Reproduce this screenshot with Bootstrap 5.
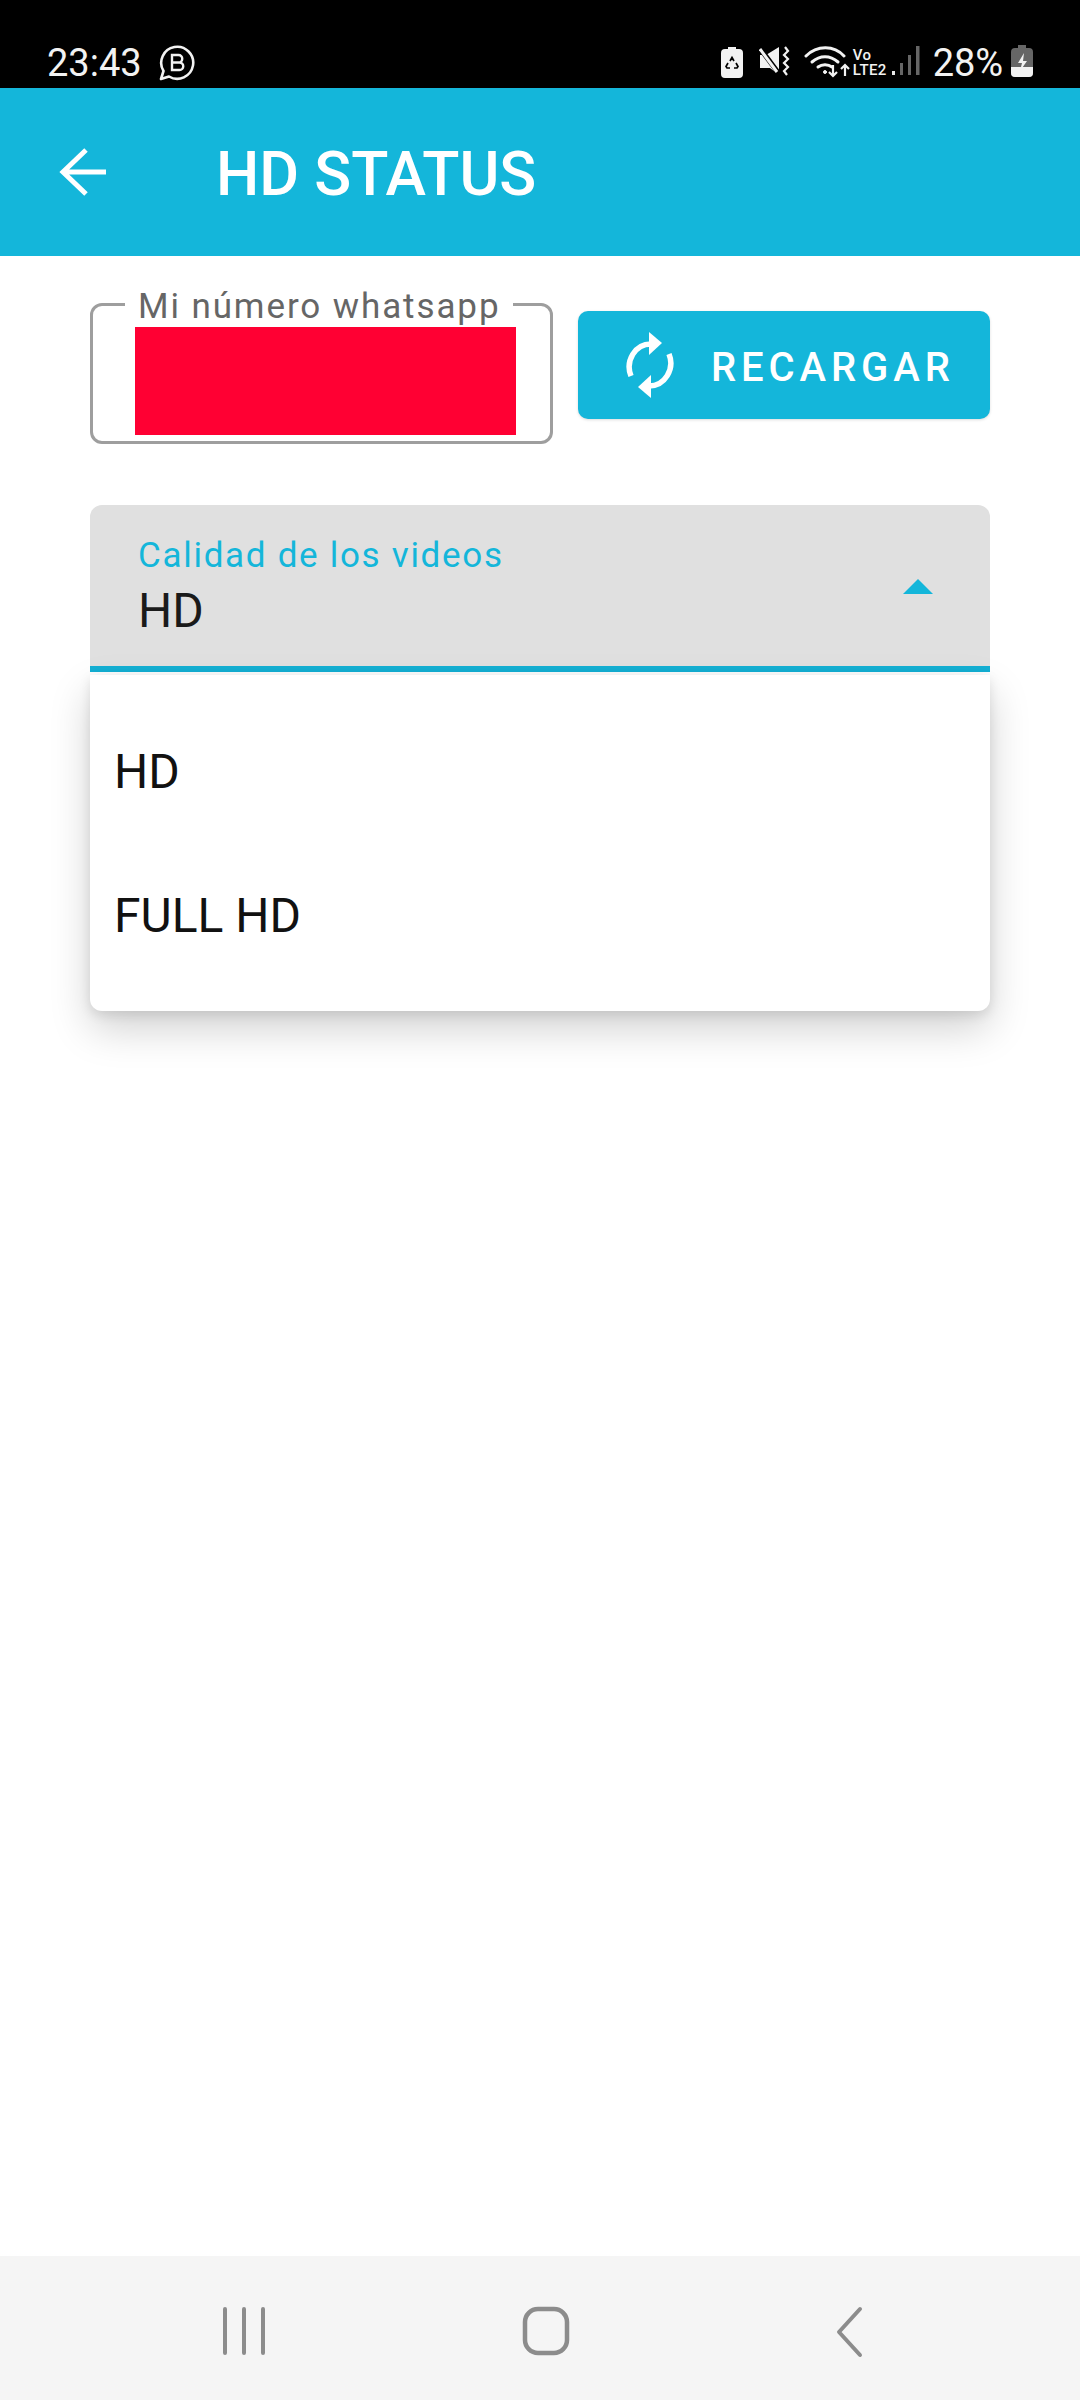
<!DOCTYPE html>
<html lang="es">
<head>
  <meta charset="UTF-8">
  <meta name="viewport" content="width=device-width, initial-scale=1">
  <title>HD Status</title>
  <link href="https://cdn.jsdelivr.net/npm/bootstrap@5.3.3/dist/css/bootstrap.min.css" rel="stylesheet">
  <style>
    body { font-family: Roboto, "Liberation Sans", sans-serif; background: #fff; }
    .app-screen { width: 1080px; min-height: 2400px; }

    .status-strip { height: 88px; background: #000; color: #f2f2f2; padding: 44px 47px 0 47px; }
    .clock { font-size: 38px; line-height: 38px; margin-right: 16px; }
    .pct { font-size: 38px; line-height: 38px; letter-spacing: -.1px; margin-left: 13px; margin-right: 8px; }
    .net-label { font-size: 15px; line-height: 15px; font-weight: 500; letter-spacing: .4px; width: 33px; margin: 4px 6px 0 3px; }

    .top-strip { height: 168px; background: #14b6da; color: #fff; padding-left: 59px; }
    .top-title { font-size: 61px; font-weight: 500; line-height: 1; margin: 5px 0 0 107px; }

    .content-area { padding: 47px 90px 0 90px; }
    .number-box { width: 463px; height: 141px; border: 3px solid #9e9e9e; border-radius: 12px; padding: 21px 34px 6px 42px; }
    .number-label { top: -19px; left: 32px; padding: 0 13px; background: #fff; color: #666; font-size: 35px; line-height: 40px; letter-spacing: 1.9px; white-space: nowrap; }
    .redacted { height: 108px; background: #ff0033; }

    .reload-btn { width: 412px; height: 108px; margin: 8px 0 0 25px; background: #14b6da; color: #fff; border: 0; border-radius: 10px; font-size: 40px; font-weight: 500; letter-spacing: 4.9px; padding: 0 0 0 48px; box-shadow: 0 1px 3px rgba(0,0,0,.14); }
    .reload-btn svg { margin-right: 37px; }
    .reload-btn span { margin-top: 6px; }
    .reload-btn:hover { background: #14b6da; color: #fff; }

    .quality-wrap { margin-top: 61px; }
    .quality-field { height: 167px; background: #e0e0e0; border-bottom: 6px solid #14b0d4; border-radius: 12px 12px 0 0; padding: 31px 57px 0 48px; }
    .quality-label { color: #14b6da; font-size: 35px; line-height: 40px; letter-spacing: 1.7px; }
    .quality-value { color: #1a1a1a; font-size: 48px; line-height: 56px; margin-top: 7px; }
    .quality-arrow { width: 0; height: 0; border-left: 15px solid transparent; border-right: 15px solid transparent; border-bottom: 15px solid #14b6da; margin-top: 43px; }

    .quality-menu { top: 170px; left: 0; right: 0; height: 336px; padding: 25px 0 23px; background: #fff; border-radius: 0 0 12px 12px; box-shadow: 0 18px 40px rgba(0,0,0,.18), 0 4px 12px rgba(0,0,0,.1); z-index: 5; }
    .quality-option { height: 144px; padding-left: 24px; color: #111; font-size: 48px; }

    .nav-strip { height: 144px; background: #f5f5f5; padding: 50px 0 0 222px; }
    .nav-recents { margin-right: 256px; }
    .nav-home { margin-right: 266px; }
  </style>
</head>
<body>
  <div class="app-screen d-flex flex-column">

    <!-- barra de estado -->
    <div class="status-strip d-flex align-items-start">
      <span class="clock">23:43</span>
      <svg width="38" height="38" viewBox="0 0 38 38" fill="none" stroke="#f2f2f2" stroke-width="2.6">
        <path d="M3 35 L5.500 27 A16 16 0 1 1 11 32.500 Z" stroke-linejoin="round"/>
        <path d="M14 11h6.500a3.400 3.400 0 0 1 0 7.500H14zM14 18.500h7.500a3.600 3.600 0 0 1 0 7.500H14z" stroke-width="2.400"/>
      </svg>
      <div class="ms-auto d-flex align-items-start">
        <svg class="me-3" width="22" height="31" viewBox="0 0 22 31" style="margin-top:3px">
          <path d="M7 0h8v2h3a4 4 0 0 1 4 4v21a4 4 0 0 1-4 4H4a4 4 0 0 1-4-4V6a4 4 0 0 1 4-4h3z" fill="#f2f2f2"/>
          <path d="M9 14l2-3.500 2 3.500M15 16l2 3.500-1 1.500h-3M7 16l-2 3.500 1 1.500h3" fill="none" stroke="#000" stroke-width="1.700"/>
        </svg>
        <svg width="31" height="30" viewBox="0 0 31 30" style="margin:2px 14px 0 0">
          <path d="M1 9h6l13-8v28l-9-7H1z" fill="#f2f2f2"/>
          <path d="M0 1l21 28" stroke="#000" stroke-width="5"/>
          <path d="M1 3l17 23" stroke="#f2f2f2" stroke-width="3"/>
          <path d="M26 1l3 4-4 4 4 4-4 4 4 4-4 4 3 4" fill="none" stroke="#f2f2f2" stroke-width="2.200"/>
        </svg>
        <svg width="46" height="32" viewBox="0 0 46 32" fill="none" stroke="#f2f2f2" stroke-linecap="round" style="margin-top:2px">
          <path d="M2 10C13-1 30-1 40 10" stroke-width="3"/>
          <path d="M8 16c8-7 18-7 26 0" stroke-width="3"/>
          <path d="M14 21c4-3 10-3 14 0" stroke-width="3"/>
          <circle cx="21" cy="26" r="1.500" fill="#f2f2f2" stroke-width="1"/>
          <path d="M29 19v11M25 26l4 4 4-4M41 30V19M37 23l4-4 4 4" stroke-width="2.200" stroke-linecap="butt"/>
        </svg>
        <div class="net-label"><div>Vo</div><div>LTE2</div></div>
        <svg width="28" height="30" viewBox="0 0 28 30" style="margin-top:2px">
          <rect x="0" y="25" width="3" height="4" fill="#e8e8e8"/>
          <rect x="8" y="17" width="3" height="12" fill="#666"/>
          <rect x="16" y="9" width="3" height="20" fill="#666"/>
          <rect x="24" y="0" width="3.500" height="29" fill="#666"/>
        </svg>
        <span class="pct">28%</span>
        <svg width="22" height="32" viewBox="0 0 22 32" style="margin-top:1px">
          <path d="M7 0h8v3h3a4 4 0 0 1 4 4v21a4 4 0 0 1-4 4H4a4 4 0 0 1-4-4V7a4 4 0 0 1 4-4h3z" fill="#666"/>
          <path d="M0 22h22v6a4 4 0 0 1-4 4H4a4 4 0 0 1-4-4z" fill="#f2f2f2"/>
          <path d="M13 8l-6 10h4l-2 8 7-10h-4z" fill="#f2f2f2"/>
        </svg>
      </div>
    </div>

    <!-- barra superior -->
    <div class="top-strip d-flex align-items-center">
      <svg width="50" height="50" viewBox="0 0 50 50" fill="none" stroke="#fff" stroke-width="5">
        <path d="M3 25H47M27 3L4 25l23 22"/>
      </svg>
      <span class="top-title">HD STATUS</span>
    </div>

    <div class="content-area flex-grow-1">
      <div class="d-flex align-items-start">
        <div class="number-box position-relative">
          <span class="number-label position-absolute">Mi número whatsapp</span>
          <div class="redacted"></div>
        </div>
        <button type="button" class="btn reload-btn d-flex align-items-center">
          <svg width="48" height="66" viewBox="0 0 48 66" fill="none" stroke="#fff" stroke-width="5.500">
            <path d="M5 44C-1 29 9 12 25 12"/>
            <path d="M43 22c6 15-4 32-20 32"/>
            <path d="M23 0l13 11-13 12z" fill="#fff" stroke="none"/>
            <path d="M25 43L12 55l13 11z" fill="#fff" stroke="none"/>
          </svg>
          <span>RECARGAR</span>
        </button>
      </div>

      <div class="quality-wrap position-relative">
        <div class="quality-field d-flex justify-content-between align-items-start">
          <div>
            <div class="quality-label">Calidad de los videos</div>
            <div class="quality-value">HD</div>
          </div>
          <div class="quality-arrow"></div>
        </div>
        <div class="quality-menu position-absolute">
          <div class="quality-option d-flex align-items-center">HD</div>
          <div class="quality-option d-flex align-items-center">FULL HD</div>
        </div>
      </div>
    </div>

    <!-- navegacion android -->
    <div class="nav-strip d-flex align-items-start">
      <svg class="nav-recents" width="44" height="50" viewBox="0 0 44 50" stroke="#8c8c8c" stroke-width="4" stroke-linecap="round">
        <path d="M3 3V47M22 3V47M41 3V47"/>
      </svg>
      <svg class="nav-home" width="48" height="50" viewBox="0 0 48 50" fill="none" stroke="#8c8c8c" stroke-width="4.500">
        <rect x="3" y="3" width="42" height="44" rx="13"/>
      </svg>
      <svg width="28" height="52" viewBox="0 0 28 52" fill="none" stroke="#8c8c8c" stroke-width="4" stroke-linecap="round" stroke-linejoin="round">
        <path d="M24 3L3 26l21 23"/>
      </svg>
    </div>

  </div>

  <script src="https://cdn.jsdelivr.net/npm/bootstrap@5.3.3/dist/js/bootstrap.bundle.min.js"></script>
</body>
</html>
